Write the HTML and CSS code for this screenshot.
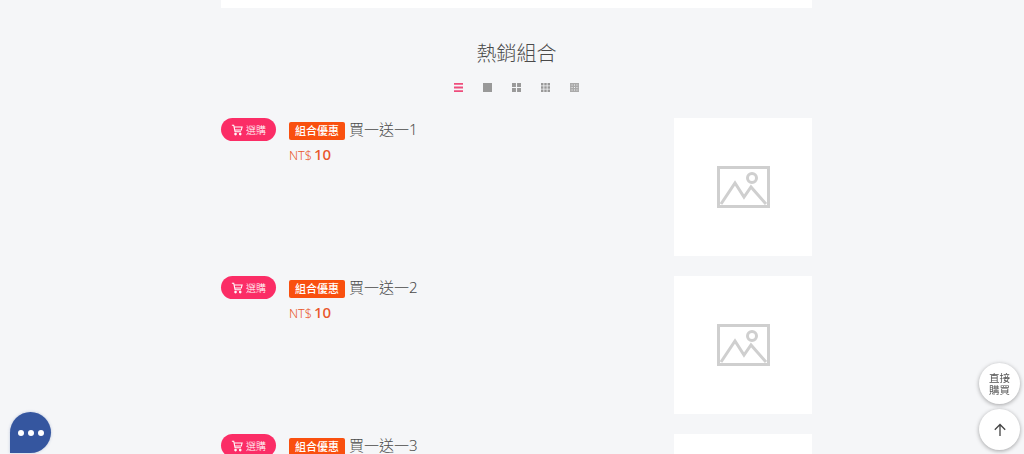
FILE: index.html
```html
<!DOCTYPE html>
<html lang="zh-Hant">
<head>
    <meta charset="UTF-8">
    <meta name="viewport" content="width=device-width, initial-scale=1.0">
    <title>熱銷組合</title>
    <link rel="stylesheet" href="styles.css">
</head>
<body>
    <div class="container">
        <div class="top-strip"></div>
        <h2 class="title">熱銷組合</h2>

        <div class="layouts">
            <svg class="layout active" viewBox="0 0 8 8"><path d="M0 0h8v1.6H0zM0 3.2h8v1.6H0zM0 6.4h8V8H0z"/></svg>
            <svg class="layout" viewBox="0 0 8 8"><path d="M0 0h8v8H0z"/></svg>
            <svg class="layout" viewBox="0 0 8 8"><path d="M0 0h3.5v3.5H0zM4.5 0H8v3.5H4.5zM0 4.5h3.5V8H0zM4.5 4.5H8V8H4.5z"/></svg>
            <svg class="layout" viewBox="0 0 8 8"><path d="M0 0h2.2v2.2H0zM2.9 0h2.2v2.2H2.9zM5.8 0H8v2.2H5.8zM0 2.9h2.2v2.2H0zM2.9 2.9h2.2v2.2H2.9zM5.8 2.9H8v2.2H5.8zM0 5.8h2.2V8H0zM2.9 5.8h2.2V8H2.9zM5.8 5.8H8V8H5.8z"/></svg>
            <svg class="layout fine" viewBox="0 0 8 8"><path d="M0 .75h8M0 2.9h8M0 5.1h8M0 7.25h8M.75 0v8M2.9 0v8M5.1 0v8M7.25 0v8"/></svg>
        </div>

        <div class="products">
            <div class="product">
                <button class="buy-btn">
                    <svg class="cart" viewBox="0 0 14 14"><path d="M1 1.5h2.2l1.5 7.5h7M3.6 3.5H13l-1 3.6H4.300"/><circle cx="5.300" cy="11.800" r=".9"/><circle cx="10.800" cy="11.800" r=".9"/></svg>
                    選購
                </button>
                <div class="info">
                    <div class="name"><span class="tag">組合優惠</span>買一送一1</div>
                    <div class="price"><span class="currency">NT$</span><b>10</b></div>
                </div>
                <div class="thumb">
                    <svg class="placeholder" viewBox="0 0 53 42"><path d="M1.500 1.500h50v39h-50zM4 38l14-21 9 14 7-10 15 17"/><circle cx="35" cy="12" r="4.500"/></svg>
                </div>
            </div>

            <div class="product">
                <button class="buy-btn">
                    <svg class="cart" viewBox="0 0 14 14"><path d="M1 1.5h2.2l1.5 7.5h7M3.6 3.5H13l-1 3.6H4.300"/><circle cx="5.300" cy="11.800" r=".9"/><circle cx="10.800" cy="11.800" r=".9"/></svg>
                    選購
                </button>
                <div class="info">
                    <div class="name"><span class="tag">組合優惠</span>買一送一2</div>
                    <div class="price"><span class="currency">NT$</span><b>10</b></div>
                </div>
                <div class="thumb">
                    <svg class="placeholder" viewBox="0 0 53 42"><path d="M1.500 1.500h50v39h-50zM4 38l14-21 9 14 7-10 15 17"/><circle cx="35" cy="12" r="4.500"/></svg>
                </div>
            </div>

            <div class="product">
                <button class="buy-btn">
                    <svg class="cart" viewBox="0 0 14 14"><path d="M1 1.5h2.2l1.5 7.5h7M3.6 3.5H13l-1 3.6H4.300"/><circle cx="5.300" cy="11.800" r=".9"/><circle cx="10.800" cy="11.800" r=".9"/></svg>
                    選購
                </button>
                <div class="info">
                    <div class="name"><span class="tag">組合優惠</span>買一送一3</div>
                    <div class="price"><span class="currency">NT$</span><b>10</b></div>
                </div>
                <div class="thumb">
                    <svg class="placeholder" viewBox="0 0 53 42"><path d="M1.500 1.500h50v39h-50zM4 38l14-21 9 14 7-10 15 17"/><circle cx="35" cy="12" r="4.500"/></svg>
                </div>
            </div>
        </div>
    </div>

    <div class="chat-btn"><i></i><i></i><i></i></div>
    <div class="float-btn direct">直接<br>購買</div>
    <div class="float-btn to-top">
        <svg viewBox="0 0 14 14"><path d="M7 13V1.500M1.800 6.700 7 1.500l5.200 5.200"/></svg>
    </div>
</body>
</html>
```

FILE: styles.css
```css
html, body {
    height: 100%;
    overflow: hidden;
}
body {
    margin: 0;
    background-color: #f5f6f8;
    color: #4a4a4a;
    font-family: "Noto Sans", "Noto Sans CJK TC", sans-serif;
}
.container {
    width: 591px;
    margin-left: 221px;
}
.top-strip {
    height: 8px;
    background-color: #fff;
}
.title {
    margin: 31px 0 0;
    font-size: 20px;
    font-weight: 300;
    line-height: 30px;
    text-align: center;
}
.layouts {
    display: flex;
    justify-content: center;
    gap: 20px;
    margin-top: 14px;
}
.layout {
    width: 9px;
    height: 9px;
    fill: #999;
}
.layout.active {
    fill: #ee4d7c;
}
.layout.fine {
    fill: none;
    stroke: #aaa;
    stroke-width: 1.300;
}
.products {
    margin-top: 26px;
}
.product {
    display: flex;
    align-items: flex-start;
    height: 138px;
    margin-bottom: 20px;
}
.buy-btn {
    display: flex;
    align-items: center;
    justify-content: center;
    gap: 3px;
    width: 55px;
    height: 23px;
    padding: 0;
    border: none;
    border-radius: 12px;
    background-color: #fb2d66;
    color: #fff;
    font-family: inherit;
    font-size: 10px;
    font-weight: 300;
    cursor: pointer;
}
.cart {
    width: 12px;
    height: 12px;
    fill: none;
    stroke: #fff;
    stroke-width: 1.200;
}
.cart circle {
    fill: #fff;
}
.info {
    flex: 1;
    margin-left: 13px;
}
.name {
    display: flex;
    align-items: center;
    font-size: 15px;
    font-weight: 300;
    line-height: 22px;
}
.tag {
    margin: 4px 4px 0 0;
    padding: 0 6px;
    border-radius: 2px;
    background-color: #f9500f;
    color: #fff;
    font-size: 11px;
    font-weight: 500;
    line-height: 18px;
}
.price {
    display: flex;
    align-items: baseline;
    gap: 2px;
    margin-top: 4px;
    color: #e9562a;
    font-size: 12.500px;
    font-weight: 300;
    line-height: 20px;
}
.price b {
    font-size: 15px;
    font-weight: 500;
}
.thumb {
    display: flex;
    align-items: center;
    justify-content: center;
    width: 138px;
    height: 138px;
    background-color: #fff;
}
.placeholder {
    width: 53px;
    height: 42px;
    fill: none;
    stroke: #cfcfcf;
    stroke-width: 3;
}
.chat-btn {
    position: fixed;
    left: 10px;
    top: 412px;
    display: flex;
    align-items: center;
    justify-content: center;
    gap: 4px;
    width: 41px;
    height: 41px;
    border-radius: 50% 50% 50% 0;
    background-color: #35569f;
    box-shadow: 0 0 3px rgba(53, 86, 159, .3);
}
.chat-btn i {
    width: 6px;
    height: 6px;
    border-radius: 50%;
    background-color: #fff;
}
.float-btn {
    position: fixed;
    left: 979px;
    display: flex;
    align-items: center;
    justify-content: center;
    width: 41px;
    height: 41px;
    border-radius: 50%;
    background-color: #fff;
    box-shadow: 0 1px 4px rgba(0, 0, 0, .35);
    color: #555;
    font-size: 10.500px;
    line-height: 12px;
    text-align: center;
}
.direct {
    top: 363px;
}
.to-top {
    top: 409px;
}
.to-top svg {
    width: 14px;
    height: 14px;
    fill: none;
    stroke: #444;
    stroke-width: 1.300;
}
```
